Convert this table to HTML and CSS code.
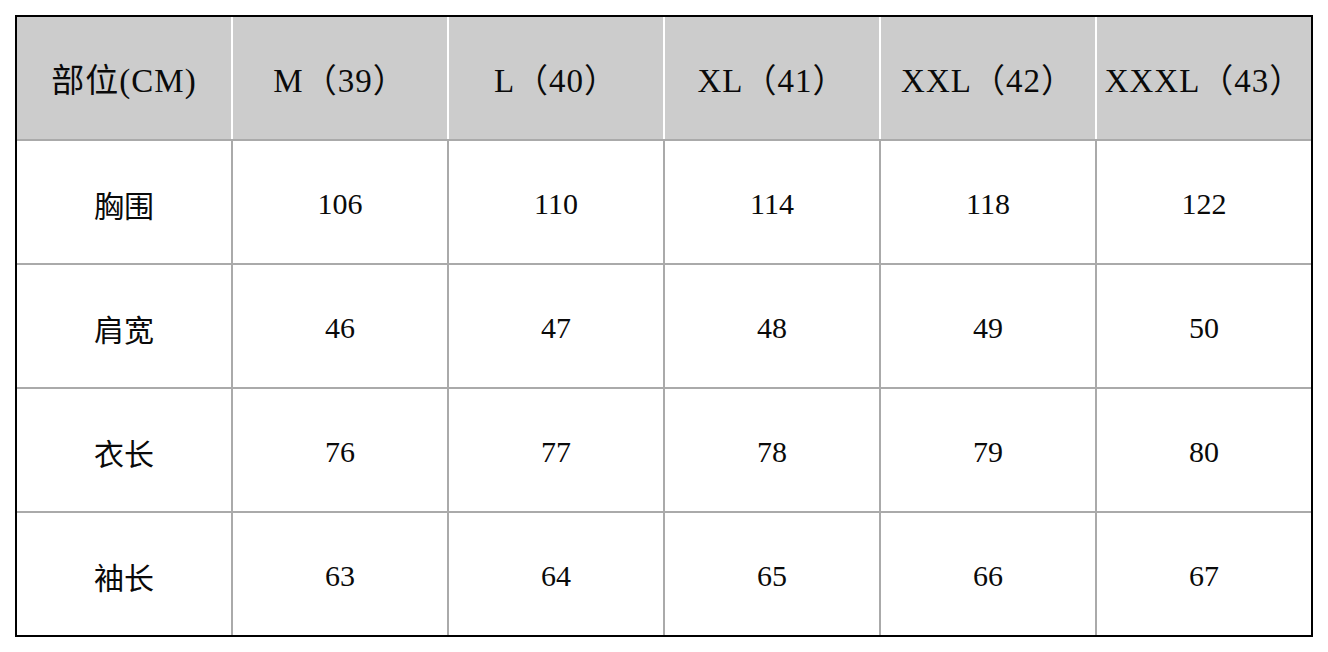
FILE: index.html
```html
<!DOCTYPE html>
<html lang="zh-CN">
<head>
<meta charset="utf-8">
<title>尺码表</title>
<link rel="stylesheet" href="styles.css">
</head>
<body>
<div class="size-table">
  <div class="row head">
    <div class="cell">部位(CM)</div>
    <div class="cell">M（39）</div>
    <div class="cell">L（40）</div>
    <div class="cell">XL（41）</div>
    <div class="cell">XXL（42）</div>
    <div class="cell">XXXL（43）</div>
  </div>
  <div class="row">
    <div class="cell">胸围</div>
    <div class="cell">106</div>
    <div class="cell">110</div>
    <div class="cell">114</div>
    <div class="cell">118</div>
    <div class="cell">122</div>
  </div>
  <div class="row">
    <div class="cell">肩宽</div>
    <div class="cell">46</div>
    <div class="cell">47</div>
    <div class="cell">48</div>
    <div class="cell">49</div>
    <div class="cell">50</div>
  </div>
  <div class="row">
    <div class="cell">衣长</div>
    <div class="cell">76</div>
    <div class="cell">77</div>
    <div class="cell">78</div>
    <div class="cell">79</div>
    <div class="cell">80</div>
  </div>
  <div class="row">
    <div class="cell">袖长</div>
    <div class="cell">63</div>
    <div class="cell">64</div>
    <div class="cell">65</div>
    <div class="cell">66</div>
    <div class="cell">67</div>
  </div>
</div>
</body>
</html>
```

FILE: styles.css
```css
html, body {
  margin: 0;
  padding: 0;
  background: #ffffff;
}

body {
  padding: 15px 0 0 15px;
}

.size-table {
  width: 1294px;
  border: 2px solid #000000;
  background: #aaaaaa;
  display: flex;
  flex-direction: column;
  gap: 2px;
  font-family: "Liberation Serif", "Noto Sans CJK SC", serif;
  color: #0a0a0a;
}

.row {
  display: grid;
  grid-template-columns: repeat(6, 214px);
  gap: 2px;
  height: 122px;
  background: #aaaaaa;
}

.row.head {
  background: #ffffff;
}

.cell {
  background: #ffffff;
  display: flex;
  align-items: center;
  justify-content: center;
  padding-top: 3px;
  box-sizing: border-box;
  font-size: 30px;
  white-space: nowrap;
}

.head .cell {
  background: #cccccc;
  padding-top: 0;
  font-size: 33px;
  letter-spacing: 1px;
}
```
